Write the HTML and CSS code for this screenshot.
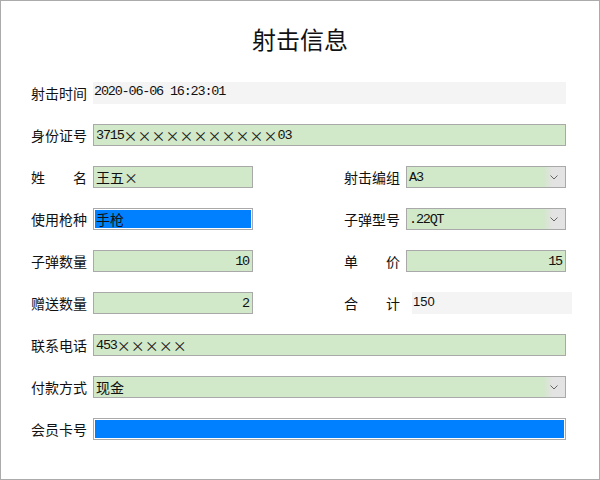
FILE: index.html
```html
<!DOCTYPE html>
<html lang="zh-CN">
<head>
    <meta charset="UTF-8">
    <meta name="viewport" content="width=device-width, initial-scale=1.0">
    <title>射击信息</title>
    <link rel="stylesheet" href="styles.css">
</head>
<body>

    <div class="window">
        <h1 class="title">射击信息</h1>

        <form class="form">
            <!-- 射击时间 -->
            <div class="row">
                <label class="label">射击时间</label>
                <div class="field plain wide"><span class="mono">2020-06-06 16:23:01</span></div>
            </div>

            <div class="row">
                <label class="label">身份证号</label>
                <div class="field wide"><span class="mono">3715</span><span class="fw">×××××××××××</span><span class="mono">03</span></div>
            </div>

            <div class="row split">
                <div class="pair">
                    <label class="label spread"><span>姓</span><span>名</span></label>
                    <div class="field"><span>王五</span><span class="fw">×</span></div>
                </div>
                <div class="pair">
                    <label class="label">射击编组</label>
                    <div class="field select"><span class="mono">A3</span><span class="arrow"><svg width="8" height="5" viewBox="0 0 8 5"><polyline points="0.5,0.5 4,4 7.5,0.5" fill="none" stroke="#666" stroke-width="1"/></svg></span></div>
                </div>
            </div>

            <div class="row split">
                <div class="pair">
                    <label class="label">使用枪种</label>
                    <div class="field active"><span>手枪</span></div>
                </div>
                <div class="pair">
                    <label class="label">子弹型号</label>
                    <div class="field select"><span class="mono">.22QT</span><span class="arrow"><svg width="8" height="5" viewBox="0 0 8 5"><polyline points="0.5,0.5 4,4 7.5,0.5" fill="none" stroke="#666" stroke-width="1"/></svg></span></div>
                </div>
            </div>

            <div class="row split">
                <div class="pair">
                    <label class="label">子弹数量</label>
                    <div class="field num"><span class="mono">10</span></div>
                </div>
                <div class="pair">
                    <label class="label spread"><span>单</span><span>价</span></label>
                    <div class="field num"><span class="mono">15</span></div>
                </div>
            </div>

            <div class="row split">
                <div class="pair">
                    <label class="label">赠送数量</label>
                    <div class="field num"><span class="mono">2</span></div>
                </div>
                <div class="pair">
                    <label class="label spread"><span>合</span><span>计</span></label>
                    <div class="field plain total"><span class="sans">150</span></div>
                </div>
            </div>

            <div class="row">
                <label class="label">联系电话</label>
                <div class="field wide"><span class="mono">453</span><span class="fw">×××××</span></div>
            </div>

            <div class="row">
                <label class="label">付款方式</label>
                <div class="field wide select"><span>现金</span><span class="arrow"><svg width="8" height="5" viewBox="0 0 8 5"><polyline points="0.5,0.5 4,4 7.5,0.5" fill="none" stroke="#666" stroke-width="1"/></svg></span></div>
            </div>

            <div class="row">
                <label class="label">会员卡号</label>
                <div class="field wide active"></div>
            </div>
        </form>
    </div>

</body>
</html>
```

FILE: styles.css
```css
body {
    margin: 0;
    font-family: "Noto Sans CJK SC", sans-serif;
    background-color: #ffffff;
    color: #111;
}
.window {
    width: 600px;
    height: 480px;
    box-sizing: border-box;
    border: 1px solid #ababab;
    background: white;
}
.title {
    margin: 25px 0 0;
    font-size: 24px;
    font-weight: normal;
    line-height: 26px;
    text-align: center;
}
.form {
    display: flex;
    flex-direction: column;
    gap: 20px;
    margin-top: 30px;
    padding-left: 30px;
}
.row {
    display: flex;
    align-items: center;
    gap: 6px;
    height: 22px;
}
.row.split {
    gap: 91px;
}
.pair {
    display: flex;
    align-items: center;
    gap: 6px;
}
.label {
    width: 56px;
    font-size: 14px;
    line-height: 22px;
    white-space: nowrap;
}
.label.spread {
    display: flex;
    justify-content: space-between;
}
.field {
    display: flex;
    align-items: center;
    box-sizing: border-box;
    width: 160px;
    height: 22px;
    padding: 0 2px;
    font-size: 14px;
    background-color: #d1e8c9;
    border: 1px solid #a9a9a9;
    overflow: hidden;
    white-space: nowrap;
}
.field.wide {
    width: 473px;
}
.field.plain {
    background-color: #f4f4f4;
    border-color: transparent;
    padding-left: 0;
    align-items: flex-start;
    padding-top: 1px;
}
.field.total {
    margin-left: 6px;
}
.field.active {
    background-color: #0080ff;
    box-shadow: inset 0 0 0 1px #ffffff;
    padding-left: 2px;
}
.field.num {
    justify-content: flex-end;
    padding-right: 3px;
}
.field.select {
    padding-right: 0;
}
.arrow {
    display: flex;
    align-items: center;
    justify-content: center;
    width: 22px;
    height: 100%;
    margin-left: auto;
    background: linear-gradient(to right, #d1e8c9, #e3e3e3 45%);
}
.mono {
    font-family: "Liberation Mono", monospace;
    font-size: 13.5px;
    letter-spacing: -1.2px;
}
.sans {
    font-family: "Liberation Sans", sans-serif;
    font-size: 13px;
}
.fw {
    font-feature-settings: "fwid";
    color: #222;
}
```
